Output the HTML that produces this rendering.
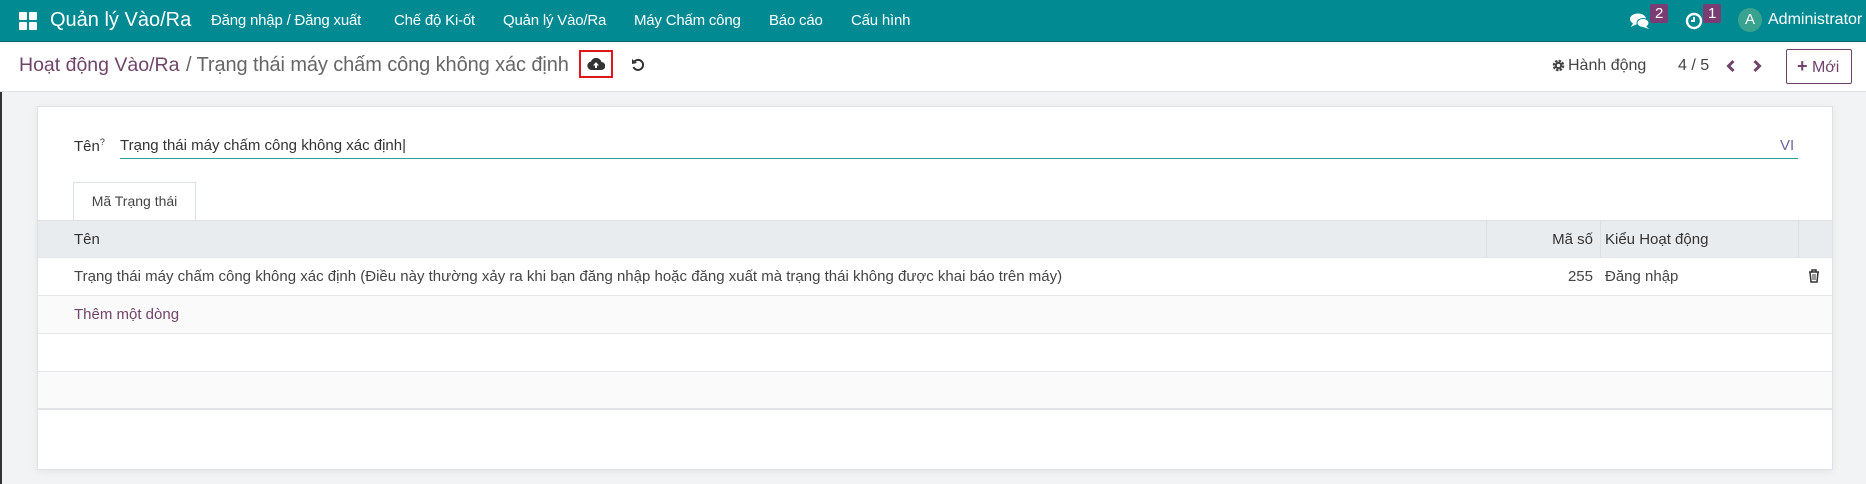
<!DOCTYPE html>
<html><head><meta charset="utf-8"><style>
*{box-sizing:border-box;margin:0;padding:0}
body{width:1866px;height:484px;overflow:hidden;background:#f2f3f5;font-family:"Liberation Sans",sans-serif;color:#4c4c4c;position:relative;font-size:15px}
.a{position:absolute;white-space:nowrap}
#nav{position:absolute;left:0;top:0;width:1866px;height:42px;background:#018a92;border-bottom:1px solid #01666b}
#nav .a{color:#fff;top:12px;font-size:15px}
#bar{position:absolute;left:0;top:42px;width:1866px;height:50px;background:#fff;border-bottom:1px solid #dee2e6}
.badge{background:#7a3d73;color:#fff;font-size:11px;padding:1px 5px;border-radius:2px}
#card{position:absolute;left:37px;top:106px;width:1796px;height:364px;background:#fff;border:1px solid #dee2e6;box-shadow:0 2px 8px rgba(0,0,0,.06)}
.row{position:absolute;left:0;width:1794px;height:38px;border-bottom:1px solid #e5e7ea}
</style></head><body>
<div style="position:absolute;left:0;top:92px;width:2px;height:392px;background:#333"></div>
<div id="nav">
<svg class="a" style="left:19px;top:12px" width="18" height="18" viewBox="0 0 18 18" fill="#fff"><rect x="0" y="0" width="8" height="8" rx="1"/><rect x="10" y="0" width="8" height="8" rx="1"/><rect x="0" y="10" width="8" height="8" rx="1"/><rect x="10" y="10" width="8" height="8" rx="1"/></svg>
<span class="a" style="left:50px;top:9px;font-size:20px">Quản lý Vào/Ra</span>
<span class="a" style="left:211px;letter-spacing:-0.2px">Đăng nhập / Đăng xuất</span>
<span class="a" style="left:394px;letter-spacing:-0.2px">Chế độ Ki-ốt</span>
<span class="a" style="left:503px;letter-spacing:-0.2px">Quản lý Vào/Ra</span>
<span class="a" style="left:634px;letter-spacing:-0.2px">Máy Chấm công</span>
<span class="a" style="left:769px;letter-spacing:-0.2px">Báo cáo</span>
<span class="a" style="left:851px;letter-spacing:-0.2px">Cấu hình</span>
<svg class="a" style="left:1630px;top:13px" width="20" height="17" viewBox="0 0 20 17" fill="#fff"><ellipse cx="8" cy="6" rx="8" ry="5.5"/><path d="M3 10 L1 14 L7 11Z"/><ellipse cx="13" cy="10" rx="6" ry="4.5" fill="#fff" stroke="#018a92" stroke-width="1"/><path d="M16 13 L19 16 L13 14Z"/></svg>
<span class="a badge" style="left:1650px;top:4px">2</span>
<svg class="a" style="left:1685px;top:12px" width="18" height="18" viewBox="0 0 18 18"><circle cx="9" cy="9" r="7" fill="none" stroke="#fff" stroke-width="2.4"/><path d="M9 5V9H6" fill="none" stroke="#fff" stroke-width="2"/></svg>
<span class="a badge" style="left:1703px;top:4px">1</span>
<div class="a" style="left:1738px;top:8px;width:24px;height:24px;border-radius:50%;background:#3aa38f;color:#fff;text-align:center;line-height:24px;font-size:15px">A</div>
<span class="a" style="left:1768px;top:11px;font-size:16px">Administrator</span>
</div>
<div id="bar">
<span class="a" style="left:19px;top:12px;font-size:19.5px;color:#71446a">Hoạt động Vào/Ra</span>
<span class="a" style="left:186px;top:12px;font-size:20px;letter-spacing:-0.1px;color:#666">/ Trạng thái máy chấm công không xác định</span>
<div class="a" style="left:579px;top:8px;width:34px;height:28px;border:2px solid #e0161b"></div>
<svg class="a" style="left:587px;top:15px" width="18" height="14" viewBox="0 0 18 14"><path d="M4 13 H14 A4 4 0 0 0 14.5 5 A5.5 5.5 0 0 0 4 4.5 A4.3 4.3 0 0 0 4 13Z" fill="#333"/><path d="M9 5 L12 8.5 H10 V11 H8 V8.5 H6Z" fill="#fff"/></svg>
<svg class="a" style="left:631px;top:16px" width="14" height="14" viewBox="0 0 14 14"><path d="M3 4 A5 5 0 1 1 2.5 9" fill="none" stroke="#333" stroke-width="2"/><path d="M1 1 L1 6 L6 5Z" fill="#333"/></svg>
<svg class="a" style="left:1552px;top:17px" width="13" height="13" viewBox="0 0 13 13"><circle cx="6.5" cy="6.5" r="4.2" fill="none" stroke="#444" stroke-width="3.2" stroke-dasharray="2.2 1.1"/><circle cx="6.5" cy="6.5" r="3.5" fill="#444"/><circle cx="6.5" cy="6.5" r="1.6" fill="#fff"/></svg>
<span class="a" style="left:1568px;top:15px;font-size:16px;color:#444">Hành động</span>
<span class="a" style="left:1678px;top:15px;font-size:16px;color:#444">4 / 5</span>
<svg class="a" style="left:1726px;top:17px" width="10" height="14" viewBox="0 0 10 14"><path d="M7.5 2 L2.5 7 L7.5 12" fill="none" stroke="#71446a" stroke-width="3"/></svg>
<svg class="a" style="left:1752px;top:17px" width="10" height="14" viewBox="0 0 10 14"><path d="M2.5 2 L7.5 7 L2.5 12" fill="none" stroke="#71446a" stroke-width="3"/></svg>
<div class="a" style="left:1786px;top:7px;width:66px;height:35px;border:1px solid #71446a;border-radius:2px;color:#71446a;font-size:16px;line-height:33px;padding-left:10px"><b style="font-size:18px">+</b> Mới</div>
</div>
<div id="card">
<span class="a" style="left:36px;top:30px;color:#333">Tên<sup style="font-size:9px">?</sup></span>
<span class="a" style="left:82px;top:30px;color:#333">Trạng thái máy chấm công không xác định|</span>
<span class="a" style="left:1742px;top:30px;color:#71639e;font-size:15px">VI</span>
<div class="a" style="left:82px;top:51px;width:1678px;height:1px;background:#2aa0a0"></div>
<div class="a" style="left:35px;top:75px;width:123px;height:38px;border:1px solid #dee2e6;border-bottom:none;background:#fff;color:#444;font-size:14px;line-height:36px;text-align:center;z-index:2">Mã Trạng thái</div>
<div class="row" style="top:113px;background:#e9ecef;border-top:1px solid #dee2e6">
<span class="a" style="left:36px;top:10px;color:#333">Tên</span>
<div class="a" style="left:1448px;top:0;width:1px;height:38px;background:#dcdfe3"></div>
<span class="a" style="right:239px;top:10px;color:#333">Mã số</span>
<div class="a" style="left:1562px;top:0;width:1px;height:38px;background:#dcdfe3"></div>
<span class="a" style="left:1567px;top:10px;color:#333">Kiểu Hoạt động</span>
<div class="a" style="left:1760px;top:0;width:1px;height:38px;background:#dcdfe3"></div>
</div>
<div class="row" style="top:151px;background:#fff">
<span class="a" style="left:36px;top:10px;color:#444">Trạng thái máy chấm công không xác định (Điều này thường xảy ra khi bạn đăng nhập hoặc đăng xuất mà trạng thái không được khai báo trên máy)</span>
<span class="a" style="right:239px;top:10px;color:#444">255</span>
<span class="a" style="left:1567px;top:10px;color:#444">Đăng nhập</span>
<svg class="a" style="left:1770px;top:11px" width="12" height="14" viewBox="0 0 12 14"><path d="M1 3H11M4 3V1H8V3M2 3L3 13H9L10 3" fill="none" stroke="#333" stroke-width="1.5"/><path d="M5 5V11M7 5V11" stroke="#333"/></svg>
</div>
<div class="row" style="top:189px;background:#fafafa"><span class="a" style="left:36px;top:10px;color:#71446a">Thêm một dòng</span></div>
<div class="row" style="top:227px;background:#fff"></div>
<div class="row" style="top:265px;background:#fafafa;border-bottom:2px solid #e2e4e7"></div>
</div>
</body></html>
